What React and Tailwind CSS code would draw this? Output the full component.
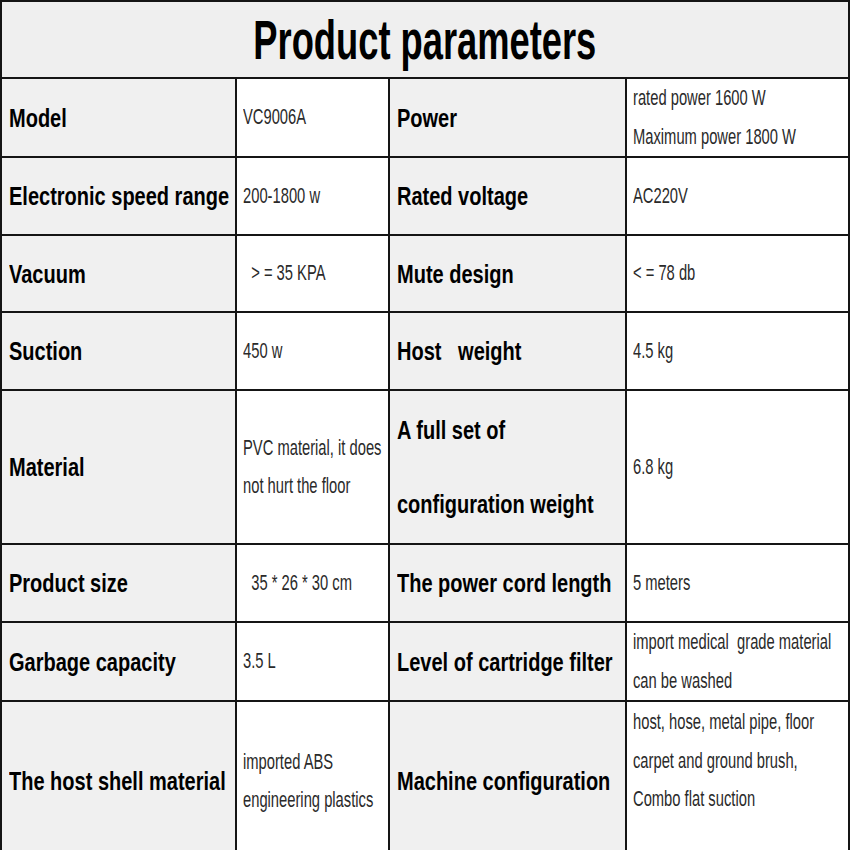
const rows = [
  { h: 'h-[78px]', l: ['Model'], v: [['VC9006A']], r: ['Power'], w: [['rated power 1600 W', 'Maximum power 1800 W']] },
  { h: 'h-[78px]', l: ['Electronic speed range'], v: [['200-1800 w']], r: ['Rated voltage'], w: [['AC220V']] },
  { h: 'h-[77px]', l: ['Vacuum'], v: [['  > = 35 KPA']], r: ['Mute design'], w: [['< = 78 db']] },
  { h: 'h-[78px]', l: ['Suction'], v: [['450 w']], r: ['Host   weight'], w: [['4.5 kg']] },
  { h: 'h-[154px]', l: ['Material'], v: [['PVC material, it does', 'not hurt the floor']], r: ['A full set of', 'configuration weight'], w: [['6.8 kg']] },
  { h: 'h-[78px]', l: ['Product size'], v: [['  35 * 26 * 30 cm']], r: ['The power cord length'], w: [['5 meters']] },
  { h: 'h-[79px]', l: ['Garbage capacity'], v: [['3.5 L']], r: ['Level of cartridge filter'], w: [['import medical  grade material', 'can be washed']] },
  { h: 'h-[160px]', l: ['The host shell material'], v: [['imported ABS', 'engineering plastics']], r: ['Machine configuration'], w: [['host, hose, metal pipe, floor', 'carpet and ground brush,', 'Combo flat suction'], true] },
];

const sans = "font-['Liberation_Sans',Arial,sans-serif]";

function Label({ lines }) {
  return (
    <td className="bg-[#f0f0f0] border-2 border-[#151515] pl-[7px] pr-1 align-middle">
      <div className={`flex flex-col gap-[38px] text-[25px] font-bold text-black whitespace-pre leading-[36px] ${sans}`}>
        {lines.map((t, i) => <span key={i} className="inline-block origin-left scale-x-[0.8]">{t}</span>)}
      </div>
    </td>
  );
}

function Value({ data }) {
  const [lines, top] = data;
  return (
    <td className={`bg-white border-2 border-[#151515] pl-[6px] ${top ? 'align-top pt-[1px]' : 'align-middle'}`}>
      <div className={`flex flex-col text-[22px] leading-[38.5px] text-[#2a2a2a] whitespace-pre ${sans}`}>
        {lines.map((t, i) => <span key={i} className="inline-block origin-left scale-x-[0.67]">{t}</span>)}
      </div>
    </td>
  );
}

export default function App() {
  return (
    <div className="w-[850px] h-[850px] overflow-hidden bg-white">
      <table className="w-[848px] border-collapse border-2 border-[#151515] table-fixed">
        <colgroup>
          <col className="w-[235px]" />
          <col className="w-[153px]" />
          <col className="w-[237px]" />
          <col className="w-[223px]" />
        </colgroup>
        <tbody>
          <tr className="h-[77px]">
            <td colSpan={4} className="bg-[#efefef] border-2 border-[#151515] text-center align-middle">
              <span className={`inline-block text-[55px] leading-[60px] font-bold text-black scale-x-[0.66] ${sans}`}>Product parameters</span>
            </td>
          </tr>
          {rows.map((row, i) => (
            <tr key={i} className={row.h}>
              <Label lines={row.l} />
              <Value data={row.v} />
              <Label lines={row.r} />
              <Value data={row.w} />
            </tr>
          ))}
        </tbody>
      </table>
    </div>
  );
}
